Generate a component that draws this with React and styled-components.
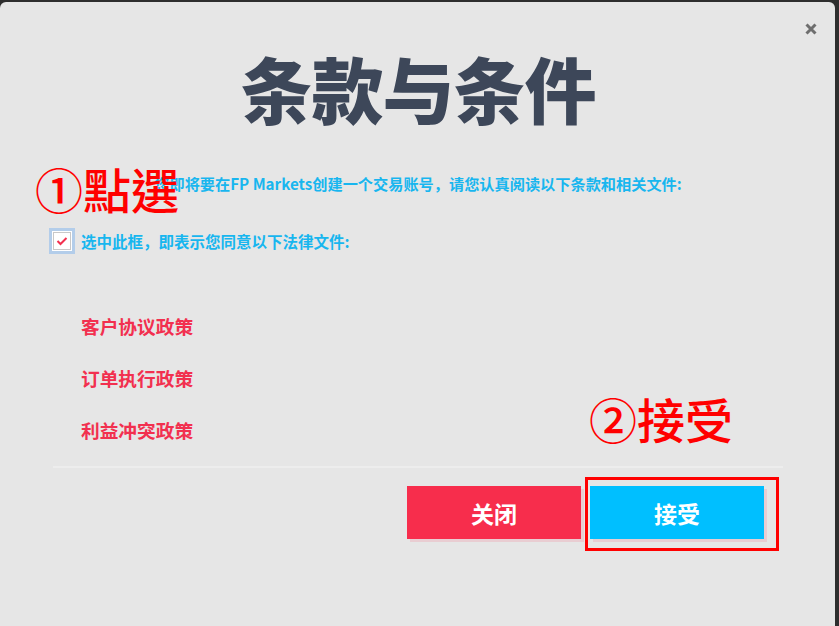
import styled, { createGlobalStyle } from 'styled-components';

const GlobalStyle = createGlobalStyle`
  html, body {
    margin: 0;
    padding: 0;
    background: #2e2e2e;
  }
  body {
    font-family: "Noto Sans CJK SC", "Noto Sans", sans-serif;
  }
`;

const StyledPanel = styled.div`
  position: relative;
  box-sizing: border-box;
  margin-top: 2px;
  width: 835px;
  height: 624px;
  padding: 0 52px 0 53px;
  background: #e6e6e6;
  border-radius: 6px 6px 0 0;
  display: flex;
  flex-direction: column;
`;

const StyledClose = styled.button`
  position: absolute;
  top: 19px;
  right: 16px;
  width: 16px;
  height: 16px;
  padding: 0;
  border: 0;
  background: transparent;
  display: flex;
  align-items: center;
  justify-content: center;
`;

const StyledTitle = styled.h1`
  margin: 49px 0 0;
  font-size: 72px;
  line-height: 72px;
  font-weight: 900;
  color: #3d4759;
  text-align: center;
  letter-spacing: -1px;
`;

const StyledIntro = styled.p`
  margin: 50px 0 0;
  font-size: 15.2px;
  line-height: 20px;
  font-weight: 700;
  color: #18b6ef;
  text-align: center;
`;

const StyledCheckRow = styled.label`
  margin: 35px 0 0 -4px;
  display: flex;
  align-items: center;
  gap: 6px;
  height: 26px;
  font-size: 15.5px;
  font-weight: 700;
  color: #18b6ef;
`;

const StyledCheckBox = styled.span`
  box-sizing: border-box;
  width: 26px;
  height: 26px;
  border: 3px solid #b3cdea;
  background: #ffffff;
  display: flex;
  align-items: center;
  justify-content: center;

  & > span {
    box-sizing: border-box;
    width: 18px;
    height: 18px;
    border: 1px solid #c8c8c8;
    display: flex;
    align-items: center;
    justify-content: center;
  }
`;

const StyledLinks = styled.ul`
  margin: 60px 0 0;
  padding: 0 0 0 28px;
  list-style: none;
  display: flex;
  flex-direction: column;
  gap: 28px;
`;

const StyledLink = styled.li`
  font-size: 18.7px;
  line-height: 24px;
  font-weight: 700;
  color: #f2304f;
`;

const StyledDivider = styled.hr`
  margin: 24px 0 0;
  border: 0;
  height: 2px;
  background: #ededed;
`;

const StyledFooter = styled.div`
  margin-top: 18px;
  display: flex;
  justify-content: flex-end;
  gap: 9px;
  padding-right: 19px;
`;

const StyledButton = styled.button`
  width: 174px;
  height: 53px;
  border: 0;
  border-radius: 0;
  background: ${(p) => p.$bg};
  color: #ffffff;
  font-family: "Noto Sans CJK SC", sans-serif;
  font-size: 23px;
  font-weight: 700;
  box-shadow: 3px 3px 0 #e9cdd2;
`;

const StyledNote = styled.div`
  position: absolute;
  left: ${(p) => p.$x}px;
  top: ${(p) => p.$y}px;
  font-family: "Noto Sans CJK TC", "Noto Sans CJK SC", sans-serif;
  font-size: 48px;
  line-height: 52px;
  font-weight: 500;
  color: #ff0000;
  white-space: nowrap;
`;

const StyledHighlight = styled.div`
  position: absolute;
  left: 585px;
  top: 475px;
  width: 194px;
  height: 74px;
  box-sizing: border-box;
  border: 3px solid #ff0000;
`;

export default function App() {
  return (
    <>
      <GlobalStyle />
      <StyledPanel>
        <StyledClose aria-label="close">
          <svg width="12" height="12" viewBox="0 0 12 12">
            <path d="M1.5 1.5 L10.5 10.5 M10.5 1.5 L1.5 10.5" stroke="#6e6e6e" strokeWidth="3" />
          </svg>
        </StyledClose>
        <StyledTitle>条款与条件</StyledTitle>
        <StyledIntro>您即将要在FP Markets创建一个交易账号，请您认真阅读以下条款和相关文件:</StyledIntro>
        <StyledCheckRow>
          <StyledCheckBox>
            <span>
              <svg width="12" height="10" viewBox="0 0 12 10">
                <path d="M1.5 5 L4.5 8 L10.5 2" fill="none" stroke="#f2304f" strokeWidth="2" />
              </svg>
            </span>
          </StyledCheckBox>
          选中此框，即表示您同意以下法律文件:
        </StyledCheckRow>
        <StyledLinks>
          <StyledLink>客户协议政策</StyledLink>
          <StyledLink>订单执行政策</StyledLink>
          <StyledLink>利益冲突政策</StyledLink>
        </StyledLinks>
        <StyledDivider />
        <StyledFooter>
          <StyledButton $bg="#f72d4c">关闭</StyledButton>
          <StyledButton $bg="#00bfff">接受</StyledButton>
        </StyledFooter>
        <StyledNote $x={35} $y={160}>①點選</StyledNote>
        <StyledNote $x={589} $y={390}>②接受</StyledNote>
        <StyledHighlight />
      </StyledPanel>
    </>
  );
}
